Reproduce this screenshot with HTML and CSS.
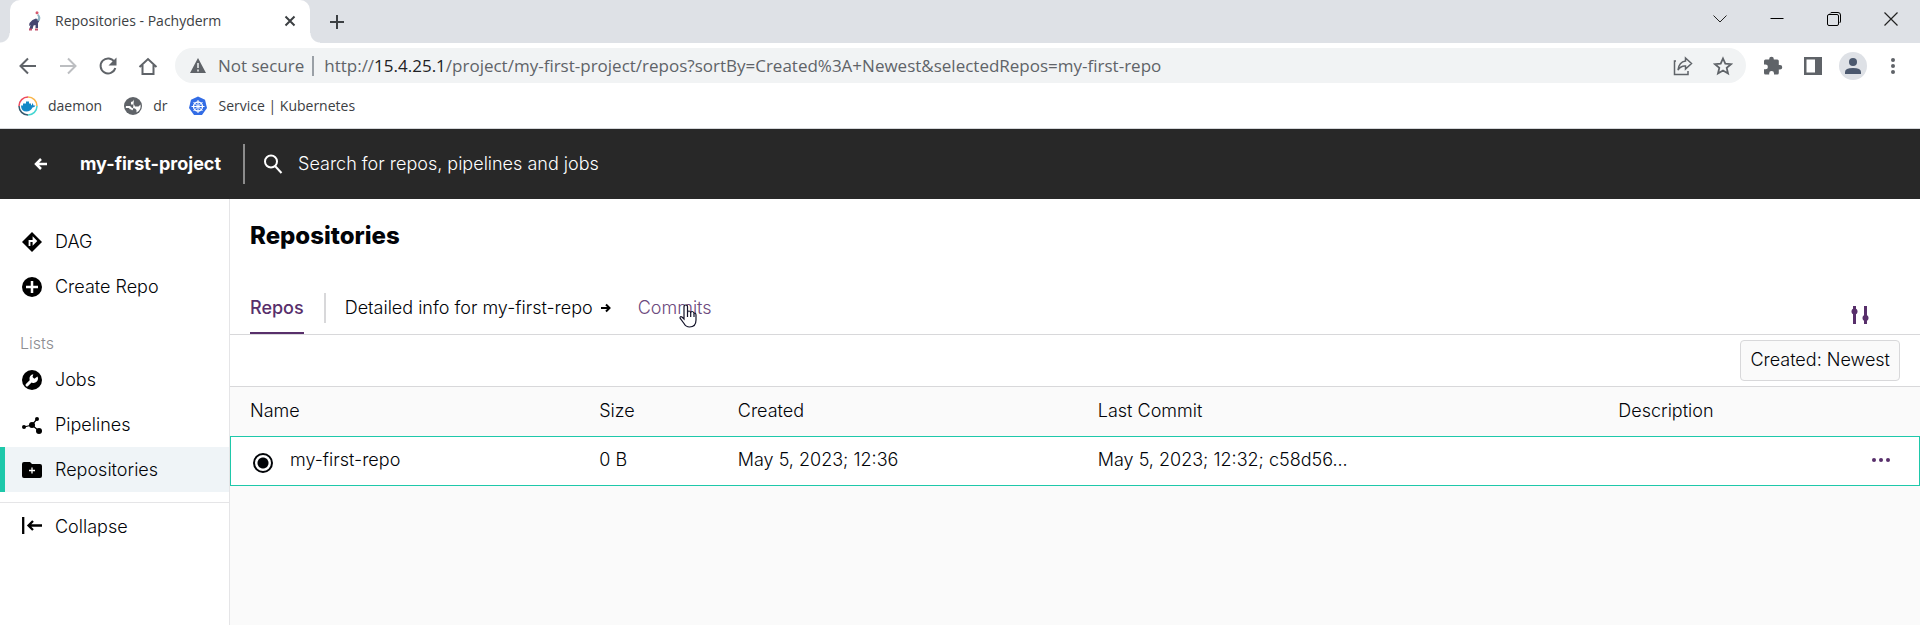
FILE: index.html
```html
<!DOCTYPE html>
<html lang="en">
<head>
<meta charset="utf-8">
<meta name="viewport" content="width=device-width, initial-scale=1">
<title>Repositories - Pachyderm</title>
<link rel="stylesheet" href="styles.css">
</head>
<body>
<div class="browser">
  <div class="tabstrip">
    <div class="tab">
      <svg class="tab-logo" width="14" height="20" viewBox="0 0 14 20"><path d="M1.500 12l3-3 3.500-1.500 2 1 1.500 1L10 12v5H7.500v-3l-2 .5L4.500 18H1.500l1-4-1.500 1z" fill="#45456f"/><path d="M9 4l1.500-1q3.500 4 .5 7L8.500 9q3-2 .5-5z" fill="#8fb4c4"/><circle cx="9" cy="1.700" r="1.500" fill="#d5586d"/><path d="M1 17.500h3v2H1zM7 17.500h3v2H7z" fill="#c2506c"/></svg>
      <span class="tab-title">Repositories - Pachyderm</span>
      <button class="plain" aria-label="Close tab"><svg width="12" height="12" viewBox="0 0 12 12" stroke="#3c4043" stroke-width="2"><path d="M1.500 1.500l9 9M10.500 1.500l-9 9"/></svg></button>
    </div>
    <button class="plain new-tab" aria-label="New tab"><svg width="14" height="14" viewBox="0 0 14 14" stroke="#3c4043" stroke-width="2"><path d="M7 0v14M0 7h14"/></svg></button>
    <div class="window-controls">
      <button class="plain" aria-label="Search tabs"><svg width="14" height="14" viewBox="0 0 14 14" fill="none" stroke="#222"><path d="M.5 3.500L7 10 13.500 3.500"/></svg></button>
      <button class="plain" aria-label="Minimize"><svg width="14" height="14" viewBox="0 0 14 14" stroke="#000"><path d="M.5 6.500h13"/></svg></button>
      <button class="plain" aria-label="Restore"><svg width="14" height="14" viewBox="0 0 14 14" fill="none" stroke="#000"><rect x=".5" y="2.500" width="11" height="11" rx="1.500"/><path d="M3 1.500q.5-1 2-1h6q2.500 0 2.500 2.500v6q0 1.500-1 2"/></svg></button>
      <button class="plain" aria-label="Close"><svg width="14" height="14" viewBox="0 0 14 14" stroke="#222" stroke-width="1.200"><path d="M.5.5l13 13M13.500.5l-13 13"/></svg></button>
    </div>
  </div>
  <div class="toolbar">
    <div class="nav-buttons">
      <button class="plain" aria-label="Back"><svg width="20" height="20" viewBox="0 0 20 20" fill="none" stroke="#5f6368" stroke-width="2"><path d="M18 10H3M10 2.500L2.500 10l7.500 7.500"/></svg></button>
      <button class="plain" aria-label="Forward"><svg width="20" height="20" viewBox="0 0 20 20" fill="none" stroke="#bcbec1" stroke-width="2"><path d="M2 10h15M10 2.500l7.500 7.500-7.500 7.500"/></svg></button>
      <button class="plain" aria-label="Reload"><svg width="20" height="20" viewBox="0 0 20 20" fill="none" stroke="#5f6368" stroke-width="2"><path d="M16.500 6A7.500 7.500 0 1 0 17.300 12"/><path d="M18.500 1.500v8h-8z" fill="#5f6368" stroke="none"/></svg></button>
      <button class="plain" aria-label="Home"><svg width="20" height="20" viewBox="0 0 20 20" fill="none" stroke="#5f6368" stroke-width="2"><path d="M1.500 11L10 3l8.500 8M4.500 9v9h11V9"/></svg></button>
    </div>
    <div class="omnibox">
      <svg width="16" height="15" viewBox="0 0 16 15"><path d="M8 0l8 15H0z" fill="#5f6368"/><path d="M8 5v5M8 11.500v2" stroke="#f1f3f4" stroke-width="1.500"/></svg>
      <span class="security">Not secure</span>
      <span class="omnibox-divider"></span>
      <span class="url" role="textbox" aria-label="Address bar" contenteditable="true" spellcheck="false">http://<span class="host">15.4.25.1</span>/project/my-first-project/repos?sortBy=Created%3A+Newest&amp;selectedRepos=my-first-repo</span>
      <button class="plain" aria-label="Share"><svg width="20" height="20" viewBox="0 0 20 20" fill="none" stroke="#5f6368" stroke-width="1.500"><path d="M3 5H1.500v13.500H15V15"/><path d="M12.500 2L18.500 7.500l-6 5.500V10Q8 9.500 5 14 6 6 12.500 5z"/></svg></button>
      <button class="plain" aria-label="Bookmark this page"><svg width="20" height="20" viewBox="0 0 20 20" fill="none" stroke="#5f6368" stroke-width="1.800"><path d="M10 2.500l2.300 5.200 5.700.5-4.300 3.700 1.300 5.600-5-3-5 3 1.300-5.600L2 8.200l5.700-.5z"/></svg></button>
    </div>
    <div class="toolbar-actions">
      <button class="plain" aria-label="Extensions"><svg width="20" height="20" viewBox="0 0 20 20"><path d="M17 9h-1.200V5q0-1.500-1.500-1.500h-3.500V3a2.300 2.300 0 0 0-4.600 0v.5H2.500Q1 3.500 1 5v3.500h1.500a2.400 2.400 0 0 1 0 4.800H1V17q0 1.500 1.500 1.500h3.700v-1.200a2.400 2.400 0 0 1 4.800 0v1.200h3.300q1.500 0 1.500-1.500v-3.500H17A2.250 2.250 0 0 0 17 9z" fill="#5f6368"/></svg></button>
      <button class="plain" aria-label="Side panel"><svg width="20" height="20" viewBox="0 0 20 20"><path d="M1 1h18v18H1z" fill="#5f6368"/><path d="M3.500 3.500H12v13H3.500z" fill="#fff"/></svg></button>
      <button class="plain avatar" aria-label="Profile"><svg width="16" height="16" viewBox="0 0 16 16" fill="#4b586e"><circle cx="8" cy="4" r="4"/><path d="M0 16v-2q0-4 8-4t8 4v2z"/></svg></button>
      <button class="plain" aria-label="Browser menu"><svg width="20" height="20" viewBox="0 0 20 20" fill="#5f6368"><circle cx="10" cy="4" r="2"/><circle cx="10" cy="10" r="2"/><circle cx="10" cy="16" r="2"/></svg></button>
    </div>
  </div>
  <nav class="bookmarks" aria-label="Bookmarks">
    <a href="#"><svg width="20" height="20" viewBox="0 0 20 20"><g fill="none" stroke-width="1.500"><path d="M10 1a9 9 0 0 1 9 9" stroke="#f9b64c"/><path d="M19 10a9 9 0 0 1-9 9" stroke="#45d6d2"/><path d="M10 19a9 9 0 0 1-9-9" stroke="#35596e"/><path d="M1 10a9 9 0 0 1 9-9" stroke="#ee4b5e"/></g><path d="M3 9.500h2v-2h3v-2h3v2h2v2q1.500-.5 1-2.500 1.500 1 1.500 2.500h2q-1 2-3 2-2 4-6 4-5.500 0-5.500-6z" fill="#1488c6"/></svg>daemon</a>
    <a href="#"><svg width="20" height="20" viewBox="0 0 20 20"><circle cx="10" cy="10" r="9" fill="#5f6368"/><path d="M11 3.500q-.5 2-3 2.500v2.500h3l1 2h3.500l2-2q1 5.500-4 8V14l-1.500-1.500-3-.5-2-2H3q-.5 1 0 2.500h3l1.500 1.500 2 .5v2.500" fill="#fff"/><path d="M3 12.500h3l1.500 1.500 2 .5V17" fill="none" stroke="#5f6368"/></svg>dr</a>
    <a href="#"><svg width="20" height="20" viewBox="0 0 20 20"><path d="M10 .5l7 3.300L19 12l-5 7H6l-5-7 2-8.200z" fill="#326ce5"/><g fill="none" stroke="#fff"><circle cx="10" cy="10.500" r="4.500" stroke-width="1.300"/><path d="M10 4v13M3.500 10.500h13M5.500 6l9 9M14.500 6l-9 9"/></g></svg>Service | Kubernetes</a>
  </nav>
</div>

<header class="app-header">
  <a class="back" href="#" aria-label="Back to projects"><svg width="14" height="14" viewBox="0 0 14 14" fill="none" stroke="#fff" stroke-width="2.500"><path d="M13 7H3M7 2L2 7l5 5"/></svg></a>
  <span class="project">my-first-project</span>
  <label class="search">
    <svg width="20" height="20" viewBox="0 0 20 20" fill="none" stroke="#fff" stroke-width="2"><circle cx="8" cy="7.500" r="6"/><path d="M12 12l6.500 7"/></svg>
    <input type="text" placeholder="Search for repos, pipelines and jobs" aria-label="Search for repos, pipelines and jobs">
  </label>
</header>

<div class="app">
  <nav class="sidebar" aria-label="Project">
    <a href="#"><svg width="20" height="20" viewBox="0 0 20 20"><path d="M10 0l10 10-10 10L0 10z"/><path d="M7.500 14V9h5M11.500 6.500L14 9l-2.500 2.500z" fill="none" stroke="#fff" stroke-width="1.800"/></svg>DAG</a>
    <a href="#"><svg width="20" height="20" viewBox="0 0 20 20"><circle cx="10" cy="10" r="10"/><path d="M10 4v12M4 10h12" stroke="#fff" stroke-width="2.500"/></svg>Create Repo</a>
    <h2>Lists</h2>
    <a href="#"><svg width="20" height="20" viewBox="0 0 20 20"><circle cx="10" cy="10" r="10"/><path d="M5 15l5-5" stroke="#fff" stroke-width="3" stroke-linecap="round"/><path d="M15.500 6.500a4.300 4.300 0 1 1-4.200-2.200L10.500 7l1.800 1.700z" fill="#fff"/></svg>Jobs</a>
    <a href="#"><svg width="20" height="20" viewBox="0 0 20 20"><path d="M2 12l8-2 5-6M10 10l7 6" fill="none" stroke="#000" stroke-width="1.200"/><circle cx="2" cy="12" r="2"/><circle cx="10" cy="10" r="3"/><circle cx="15" cy="4" r="2"/><circle cx="17" cy="16" r="3"/></svg>Pipelines</a>
    <a class="current" href="#" aria-current="page"><svg width="20" height="20" viewBox="0 0 20 20"><path d="M2 2h6l2 2h8q2 0 2 2v10q0 2-2 2H2q-2 0-2-2V4q0-2 2-2z"/><path d="M10 7.500v6M7 10.500h6" stroke="#fff" stroke-width="1.300"/></svg>Repositories</a>
    <div class="collapse">
      <button class="plain"><svg width="20" height="20" viewBox="0 0 20 20" fill="none" stroke="#000" stroke-width="2.300"><path d="M1.200 0v17M20 8.500H7M11 4L6.500 8.500 11 13"/></svg>Collapse</button>
    </div>
  </nav>

  <main>
    <h1>Repositories</h1>
    <div class="view-bar">
      <div class="view-tabs">
        <a class="selected" href="#">Repos</a>
        <span class="detail">Detailed info for my-first-repo <svg width="10" height="10" viewBox="0 0 10 10" fill="none" stroke="#000" stroke-width="2"><path d="M0 5h8M5 1.500L8.500 5 5 8.500"/></svg></span>
        <a class="commits" href="#">Commits<svg class="pointer" width="18" height="24" viewBox="0 0 18 24"><path d="M5 15V3q0-2 1.800-2T8.500 3v6q0-2 1.500-2t1.700 2q0-1.500 1.500-1.500T15 9.500q1.800-1 2 1.500v5q0 7-6.500 7-3.500 0-5.500-3.500L1 14q0-2 2-1z" fill="#fff" stroke="#111128" stroke-width="1.200"/><path d="M8.500 9v4M11.700 9v4M15 10v3" stroke="#111128" stroke-width="1.200"/></svg></a>
      </div>
      <button class="plain" aria-label="Filters"><svg width="18" height="18" viewBox="0 0 18 18" fill="#582f6b"><path d="M2 0h3v18H2zM13 0h3v18h-3z"/><circle cx="3.500" cy="5.500" r="3"/><circle cx="14.500" cy="12" r="3"/></svg></button>
    </div>
    <div class="filters"><button class="chip">Created: Newest</button></div>
    <table>
      <colgroup><col class="c-name"><col class="c-size"><col class="c-created"><col class="c-commit"><col><col class="c-menu"></colgroup>
      <thead><tr><th>Name</th><th>Size</th><th>Created</th><th>Last Commit</th><th>Description</th><th></th></tr></thead>
      <tbody><tr>
        <td><label class="repo"><input type="radio" name="repo" checked>my-first-repo</label></td>
        <td>0 B</td><td>May 5, 2023; 12:36</td><td>May 5, 2023; 12:32; c58d56...</td><td></td>
        <td><button class="plain more" aria-label="Repository actions"><svg width="18" height="4" viewBox="0 0 18 4" fill="#582f6b"><circle cx="2" cy="2" r="2"/><circle cx="9" cy="2" r="2"/><circle cx="16" cy="2" r="2"/></svg></button></td>
      </tr></tbody>
    </table>
  </main>
</div>
</body>
</html>
```
FILE: styles.css
```css
* { box-sizing: border-box; }
body {
  margin: 0;
  min-height: 100vh;
  display: flex;
  flex-direction: column;
  background: #fff;
  color: #020408;
  font: 300 18px/24px Inter, "Liberation Sans", sans-serif;
}
a { color: inherit; text-decoration: none; }
svg { display: block; flex: none; }
.plain {
  display: flex;
  align-items: center;
  padding: 0;
  border: 0;
  background: none;
  color: inherit;
  font: inherit;
  cursor: pointer;
}

/* Browser frame */
.browser {
  border-bottom: 1px solid #d5d7da;
  font: 14px/20px "Open Sans", "Noto Sans", sans-serif;
  color: #3c4043;
}
.tabstrip {
  display: flex;
  align-items: stretch;
  height: 43px;
  padding-left: 10px;
  background: #dee1e6;
}
.tab {
  position: relative;
  display: flex;
  align-items: center;
  width: 300px;
  padding: 0 14px 2px 18px;
  border-radius: 10px 10px 0 0;
  background: #fff;
}
.tab::before, .tab::after {
  content: "";
  position: absolute;
  bottom: 0;
  width: 10px;
  height: 10px;
}
.tab::before { right: 100%; background: radial-gradient(circle at 0 0, #dee1e6 9px, #fff 10px); }
.tab::after { left: 100%; background: radial-gradient(circle at 100% 0, #dee1e6 9px, #fff 10px); }
.tab-title { flex: 1; margin-left: 13px; }
.new-tab { margin-left: 20px; }
.window-controls {
  display: flex;
  gap: 43px;
  margin-left: auto;
  padding: 0 22px 6px 0;
}
.toolbar {
  display: flex;
  align-items: center;
  padding: 5px 17px 5px 18px;
}
.nav-buttons { display: flex; gap: 20px; }
.omnibox {
  flex: 1;
  display: flex;
  align-items: center;
  min-width: 0;
  height: 35px;
  margin: 0 17px;
  padding: 0 13px 0 15px;
  border-radius: 18px;
  background: #f1f3f4;
  color: #5f6368;
  font-size: 17px;
  line-height: 26px;
}
.security { margin-left: 12px; white-space: nowrap; }
.omnibox-divider { width: 2px; height: 20px; margin: 0 10px 0 8px; background: #9aa0a6; }
.url { flex: 1; min-width: 0; overflow: hidden; white-space: nowrap; outline: 0; }
.host { color: #202124; }
.omnibox .plain { margin-left: 20px; }
.toolbar-actions { display: flex; align-items: center; gap: 20px; }
.avatar {
  justify-content: center;
  width: 28px;
  height: 28px;
  margin: 0 -4px;
  border-radius: 50%;
  background: #dee1e6;
}
.bookmarks {
  display: flex;
  gap: 21px;
  padding: 8px 18px 12px;
}
.bookmarks a { display: flex; align-items: center; gap: 10px; }

/* Application header */
.app-header {
  display: flex;
  align-items: center;
  height: 70px;
  padding-left: 34px;
  background: #282828;
  color: #fff;
}
.project { margin-left: 32px; font-weight: 700; }
.search {
  flex: 1;
  display: flex;
  align-items: center;
  gap: 15px;
  height: 40px;
  margin-left: 22px;
  padding-left: 18px;
  border-left: 2px solid #8c8c8c;
}
.search input {
  flex: 1;
  padding: 0;
  border: 0;
  outline: 0;
  background: none;
  color: #fff;
  font: inherit;
}
.search input::placeholder { color: #fff; opacity: 1; }

/* Sidebar */
.app { flex: 1; display: flex; }
.sidebar {
  flex: none;
  width: 230px;
  padding-top: 20px;
  border-right: 1px solid #e5e5e7;
}
.sidebar a, .collapse .plain {
  display: flex;
  align-items: center;
  gap: 13px;
  height: 45px;
  padding-left: 22px;
}
.sidebar h2 {
  margin: 22px 0 2px 20px;
  color: #8d8d91;
  font: 300 16px/24px Inter, sans-serif;
}
.sidebar .current {
  padding-left: 17px;
  border-left: 5px solid #1ec8aa;
  background: #eff4f7;
}
.collapse {
  margin-top: 10px;
  padding-top: 1px;
  border-top: 1px solid #e5e5e7;
}

/* Repository list */
main {
  flex: 1;
  display: flex;
  flex-direction: column;
  min-width: 0;
  background: #fafafa;
}
h1 {
  margin: 0;
  padding: 21px 20px 0;
  background: #fff;
  font-size: 24px;
  line-height: 32px;
  font-weight: 800;
}
.view-bar {
  display: flex;
  justify-content: space-between;
  padding: 38px 51px 0 20px;
  border-bottom: 1px solid #d8d8da;
  background: #fff;
}
.view-bar .plain { padding-top: 5px; }
.view-tabs { display: flex; }
.view-tabs a { height: 44px; padding: 6px 0; }
.view-tabs .selected {
  border-bottom: 2px solid #582f6b;
  color: #582f6b;
  font-weight: 500;
}
.detail {
  display: flex;
  align-items: center;
  gap: 8px;
  height: 30px;
  margin: 3px 27px 0 20px;
  padding-left: 19px;
  border-left: 2px solid #d8d8da;
}
.view-tabs .commits { position: relative; color: #6d4a7e; }
.pointer { position: absolute; left: 41px; top: 14px; }
.filters {
  display: flex;
  justify-content: flex-end;
  padding: 5px 20px 5px;
  border-bottom: 1px solid #d8d8da;
  background: #fff;
}
.chip {
  height: 41px;
  padding: 0 9px 2px;
  border: 1px solid #d8d8da;
  border-radius: 4px;
  background: #fafafa;
  color: inherit;
  font: inherit;
}
table {
  width: 100%;
  border-collapse: separate;
  border-spacing: 0;
  table-layout: fixed;
}
th, td { height: 49px; padding: 0 0 2px 16px; text-align: left; font-weight: 300; }
th:first-child, td:first-child { padding-left: 20px; }
td { height: 50px; background: #fff; }
tbody tr { outline: 1px solid #1ec8aa; outline-offset: -1px; }
.c-name { width: 20.9%; }
.c-size { width: 8.2%; }
.c-created { width: 21.3%; }
.c-commit { width: 30.8%; }
.c-menu { width: 64px; }
.repo { display: flex; align-items: center; gap: 17px; }
.repo input {
  appearance: none;
  width: 20px;
  height: 20px;
  margin: 6px 0 0 3px;
  border: 2px solid #020408;
  border-radius: 50%;
  background: radial-gradient(circle, #020408 5px, #fff 6px);
}
```
